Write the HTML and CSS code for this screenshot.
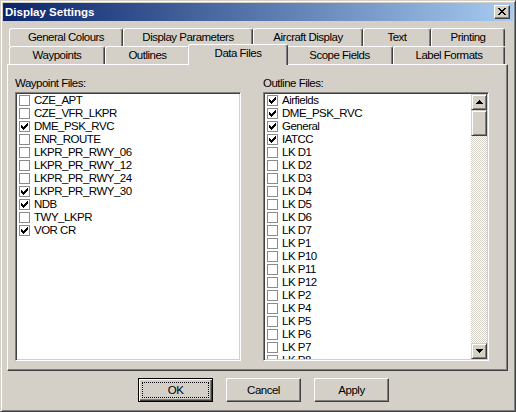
FILE: index.html
```html
<!DOCTYPE html>
<html>
<head>
<meta charset="utf-8">
<link rel="stylesheet" href="styles.css">
</head>
<body>
<div class="window">
  <div class="titlebar">
    <span class="title">Display Settings</span>
    <span class="close"><svg width="8" height="7" viewBox="0 0 8 7" shape-rendering="crispEdges"><path d="M0 0h2v1h-2zM6 0h2v1h-2zM1 1h2v1h-2zM5 1h2v1h-2zM2 2h4v1h-4zM3 3h2v1h-2zM2 4h4v1h-4zM1 5h2v1h-2zM5 5h2v1h-2zM0 6h2v1h-2zM6 6h2v1h-2z" fill="#000"/></svg></span>
  </div>
  <div class="content">
    <div class="tabs">
      <div class="tabrow">
        <div class="tab w114">General Colours</div>
        <div class="tab w130">Display Parameters</div>
        <div class="tab w110">Aircraft Display</div>
        <div class="tab w68">Text</div>
        <div class="tab w74">Printing</div>
      </div>
      <div class="tabrow">
        <div class="tab w96">Waypoints</div>
        <div class="tab w85">Outlines</div>
        <div class="tab w96 selected">Data Files</div>
        <div class="tab w107">Scope Fields</div>
        <div class="tab w112">Label Formats</div>
      </div>
    </div>
    <div class="panel">
      <div class="column">
        <div class="label">Waypoint Files:</div>
        <div class="listbox">
          <div class="items">
            <div class="item"><span class="cb"></span>CZE_APT</div>
            <div class="item"><span class="cb"></span>CZE_VFR_LKPR</div>
            <div class="item"><span class="cb on"></span>DME_PSK_RVC</div>
            <div class="item"><span class="cb"></span>ENR_ROUTE</div>
            <div class="item"><span class="cb"></span>LKPR_PR_RWY_06</div>
            <div class="item"><span class="cb"></span>LKPR_PR_RWY_12</div>
            <div class="item"><span class="cb"></span>LKPR_PR_RWY_24</div>
            <div class="item"><span class="cb on"></span>LKPR_PR_RWY_30</div>
            <div class="item"><span class="cb on"></span>NDB</div>
            <div class="item"><span class="cb"></span>TWY_LKPR</div>
            <div class="item"><span class="cb on"></span>VOR CR</div>
          </div>
        </div>
      </div>
      <div class="column">
        <div class="label">Outline Files:</div>
        <div class="listbox">
          <div class="items">
            <div class="item"><span class="cb on"></span>Airfields</div>
            <div class="item"><span class="cb on"></span>DME_PSK_RVC</div>
            <div class="item"><span class="cb on"></span>General</div>
            <div class="item"><span class="cb on"></span>IATCC</div>
            <div class="item"><span class="cb"></span>LK D1</div>
            <div class="item"><span class="cb"></span>LK D2</div>
            <div class="item"><span class="cb"></span>LK D3</div>
            <div class="item"><span class="cb"></span>LK D4</div>
            <div class="item"><span class="cb"></span>LK D5</div>
            <div class="item"><span class="cb"></span>LK D6</div>
            <div class="item"><span class="cb"></span>LK D7</div>
            <div class="item"><span class="cb"></span>LK P1</div>
            <div class="item"><span class="cb"></span>LK P10</div>
            <div class="item"><span class="cb"></span>LK P11</div>
            <div class="item"><span class="cb"></span>LK P12</div>
            <div class="item"><span class="cb"></span>LK P2</div>
            <div class="item"><span class="cb"></span>LK P4</div>
            <div class="item"><span class="cb"></span>LK P5</div>
            <div class="item"><span class="cb"></span>LK P6</div>
            <div class="item"><span class="cb"></span>LK P7</div>
            <div class="item"><span class="cb"></span>LK P8</div>
          </div>
          <div class="scrollbar">
            <div class="sbtn"><svg width="7" height="4" viewBox="0 0 7 4" shape-rendering="crispEdges"><path d="M3 0h1v1h-1zM2 1h3v1h-3zM1 2h5v1h-5zM0 3h7v1h-7z" fill="#000"/></svg></div>
            <div class="thumb"></div>
            <div class="track"></div>
            <div class="sbtn"><svg width="7" height="4" viewBox="0 0 7 4" shape-rendering="crispEdges"><path d="M0 0h7v1h-7zM1 1h5v1h-5zM2 2h3v1h-3zM3 3h1v1h-1z" fill="#000"/></svg></div>
          </div>
        </div>
      </div>
    </div>
    <div class="buttons">
      <div class="btn default"><span class="focus">OK</span></div>
      <div class="btn">Cancel</div>
      <div class="btn">Apply</div>
    </div>
  </div>
</div>
</body>
</html>
```
FILE: styles.css
```css
html, body {
  margin: 0;
  padding: 0;
  background: #d4d0c8;
}
body {
  font-family: "Liberation Sans", Arial, sans-serif;
  font-size: 11.5px;
  letter-spacing: -0.5px;
  color: #000;
}
.window {
  width: 516px;
  height: 412px;
  box-sizing: border-box;
  border: 1px solid;
  border-color: #d4d0c8 #404040 #404040 #d4d0c8;
  box-shadow: inset 1px 1px #fff, inset -1px -1px #808080;
  padding: 2px;
  background: #d4d0c8;
  display: flex;
  flex-direction: column;
}
.titlebar {
  height: 18px;
  flex: none;
  background: linear-gradient(to right, #0a246a, #a6caf0);
  display: flex;
  align-items: center;
  justify-content: space-between;
  padding: 0 3px 0 2px;
}
.title {
  font-family: "Liberation Sans", sans-serif;
  font-weight: bold;
  font-size: 11.5px;
  letter-spacing: 0;
  color: #fff;
}
.close {
  width: 16px;
  height: 14px;
  box-sizing: border-box;
  background: #d4d0c8;
  border: 1px solid;
  border-color: #fff #404040 #404040 #fff;
  box-shadow: inset -1px -1px #808080;
  display: flex;
  align-items: center;
  justify-content: center;
  padding: 0 1px 1px 0;
}
.close svg { display: block; }
.content {
  padding: 0 0 0 4px;
}
.tabs {
  padding-left: 2px;
  margin-top: 7px;
}
.tabrow {
  display: flex;
  height: 18px;
}
.tab {
  flex: none;
  height: 18px;
  box-sizing: border-box;
  background: #d4d0c8;
  border-top: 1px solid #fff;
  border-left: 1px solid #fff;
  border-right: 1px solid #404040;
  border-radius: 3px 3px 0 0;
  box-shadow: inset -1px 0 #808080;
  text-align: center;
  line-height: 17px;
  white-space: nowrap;
}
.tab.selected {
  margin: -2px -2px 0;
  height: 21px;
  z-index: 2;
  line-height: 17px;
}
.w114 { width: 114px; }
.w130 { width: 130px; }
.w110 { width: 110px; }
.w68 { width: 68px; }
.w74 { width: 74px; }
.w96 { width: 96px; }
.w85 { width: 85px; }
.w107 { width: 107px; }
.w112 { width: 112px; }
.tab.selected.w96 { width: 100px; }
.panel {
  width: 501px;
  height: 307px;
  box-sizing: border-box;
  border: 1px solid;
  border-color: #fff #404040 #404040 #fff;
  box-shadow: inset -1px -1px #808080;
  display: grid;
  grid-template-columns: 226px 226px;
  column-gap: 22px;
  padding: 12px 0 0 7px;
  align-content: start;
}
.label {
  height: 13px;
  line-height: 13px;
  margin-bottom: 2px;
}
.listbox {
  height: 269px;
  box-sizing: border-box;
  border: 1px solid;
  border-color: #808080 #fff #fff #808080;
  box-shadow: inset 1px 1px #404040, inset -1px -1px #d4d0c8;
  padding: 1px;
  background: #fff;
  display: flex;
  overflow: hidden;
}
.items {
  flex: 1;
  overflow: hidden;
  position: relative;
  z-index: 0;
}
.item {
  height: 13px;
  line-height: 13px;
  display: flex;
  align-items: center;
  white-space: nowrap;
}
.cb {
  flex: none;
  width: 11px;
  height: 11px;
  box-sizing: border-box;
  border: 1px solid #8a8a8a;
  background: #fff;
  margin: 0 4px 0 2px;
  position: relative;
}
.cb.on::after {
  content: "";
  position: absolute;
  left: 1px;
  top: 1px;
  width: 7px;
  height: 7px;
  background: url("data:image/svg+xml,%3Csvg xmlns='http://www.w3.org/2000/svg' width='7' height='7' shape-rendering='crispEdges'%3E%3Cpath d='M0 2h1v3h-1zM1 3h1v3h-1zM2 4h1v3h-1zM3 3h1v3h-1zM4 2h1v3h-1zM5 1h1v3h-1zM6 0h1v3h-1z' fill='%23000'/%3E%3C/svg%3E") no-repeat;
}
.scrollbar {
  flex: none;
  width: 16px;
  display: flex;
  flex-direction: column;
}
.sbtn, .thumb {
  flex: none;
  height: 16px;
  box-sizing: border-box;
  background: #d4d0c8;
  border: 1px solid;
  border-color: #d4d0c8 #404040 #404040 #d4d0c8;
  box-shadow: inset 1px 1px #fff, inset -1px -1px #808080;
  display: flex;
  align-items: center;
  justify-content: center;
}
.sbtn svg { display: block; }
.thumb {
  height: 26px;
}
.track {
  flex: 1;
  background: repeating-conic-gradient(#d4d0c8 0 25%, #fff 0 50%) 0 0 / 2px 2px;
}
.buttons {
  display: flex;
  gap: 13px;
  padding-left: 131px;
  margin-top: 7px;
}
.btn {
  width: 75px;
  height: 24px;
  box-sizing: border-box;
  background: #d4d0c8;
  border: 1px solid;
  border-color: #fff #404040 #404040 #fff;
  box-shadow: inset -1px -1px #808080;
  display: flex;
  align-items: center;
  justify-content: center;
}
.btn.default {
  border: 1px solid #000;
  box-shadow: inset 1px 1px #fff, inset -1px -1px #404040, inset -2px -2px #808080;
  padding: 3px;
}
.focus {
  flex: 1;
  align-self: stretch;
  border: 1px dotted #000;
  display: flex;
  align-items: center;
  justify-content: center;
}
```
